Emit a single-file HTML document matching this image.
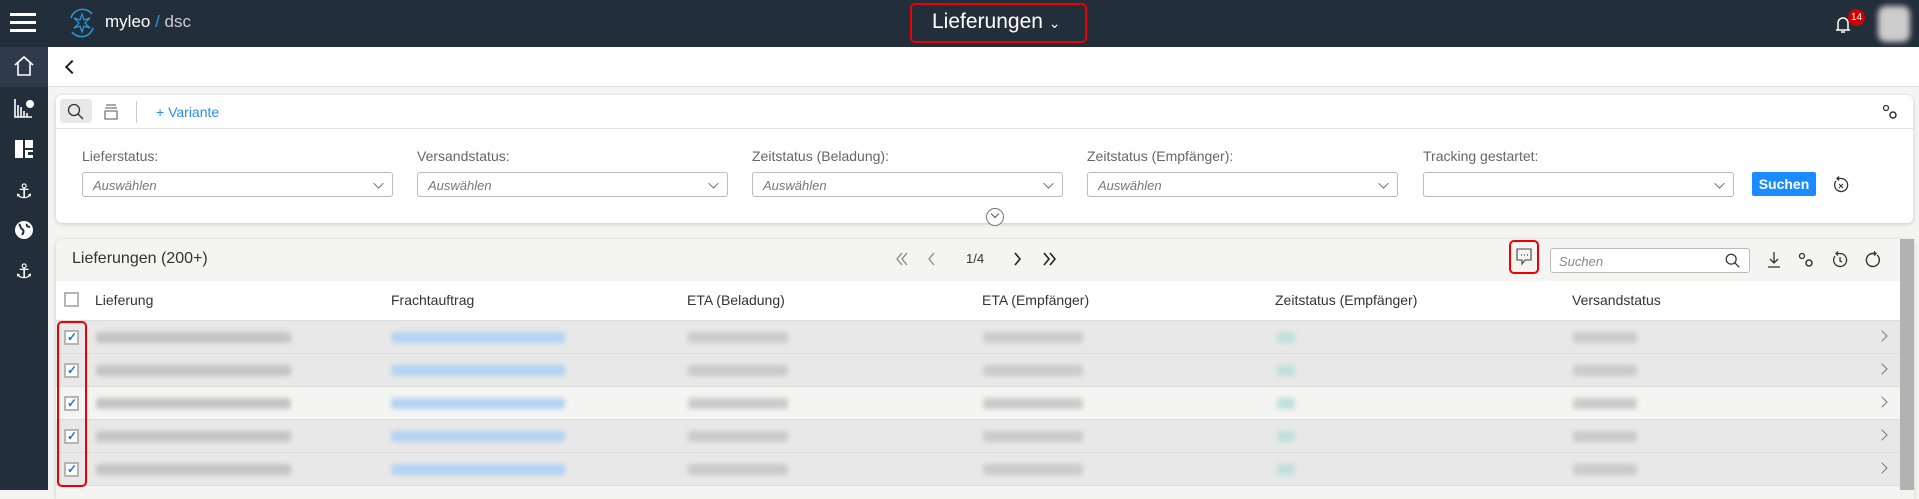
<!DOCTYPE html>
<html><head><meta charset="utf-8"><style>
*{box-sizing:border-box;margin:0;padding:0}
body{width:1919px;height:490px;overflow:hidden;background:#f4f4f3;font-family:"Liberation Sans",sans-serif;position:relative;color:#333}
.a{position:absolute}
.hdr{left:0;top:0;width:1919px;height:47px;background:#232e3b}
.side{left:0;top:47px;width:48px;height:443px;background:#232e3b}
.bc{left:48px;top:47px;width:1871px;height:40px;background:#fff;border-bottom:1px solid #e2e2e2}
.card{background:#fff;border-radius:6px;box-shadow:0 1px 4px rgba(0,0,0,.18)}
.lbl{font-size:14px;color:#666;top:148px}
.inp{top:172px;height:25px;width:311px;border:1px solid #bbb;border-radius:3px;background:#fff;font-size:13px;font-style:italic;color:#777;padding:5px 10px}
.chev{position:absolute;right:9px;top:6px;width:9px;height:9px;border-right:1.3px solid #555;border-bottom:1.3px solid #555;transform:rotate(45deg) scale(.8)}
.th{font-size:14px;color:#333;top:292px}
.row{left:56px;width:1844px;height:33px;border-bottom:1px solid #ddd}
.cb{width:15px;height:15px;border:2px solid #b5b5b5;background:#fff}
.blur{height:11px;border-radius:3px;filter:blur(2.5px)}
.rc{position:absolute;right:14px;top:11px;width:8px;height:8px;border-right:1px solid #777;border-top:1px solid #777;transform:rotate(45deg)}
</style></head><body>
<div class="a hdr"></div>
<div class="a" style="left:10px;top:13px;width:26px;height:3px;background:#fff;box-shadow:0 8px 0 #fff,0 16px 0 #fff"></div>
<svg class="a" style="left:65px;top:6px" width="34" height="34" viewBox="0 0 34 34"><path d="M6 12A12 12 0 0 1 27 8M28 22A12 12 0 0 1 7 26" stroke="#2a9ae0" fill="none" stroke-width="1.5"/><path d="M17 8L19 14 25 12 20 17 25 22 19 20 17 26 15 20 9 22 14 17 9 12 15 14Z" stroke="#2a9ae0" fill="none" stroke-width="1.2"/></svg>
<div class="a" style="left:105px;top:12px;font-size:17px;color:#fff">myleo<span style="color:#2a9ae0"> /</span><span style="color:#ccc"> dsc</span></div>
<div class="a" style="left:910px;top:3px;width:177px;height:40px;border:2px solid #e00;border-radius:5px"></div>
<div class="a" style="left:932px;top:10px;font-size:21px;color:#fff">Lieferungen <span style="font-size:14px">&#8964;</span></div>
<svg class="a" style="left:1831px;top:12px" width="24" height="24" viewBox="0 0 24 24"><path d="M5 18H19M7 18V11A5 5 0 0 1 17 11V18M10 20H14" stroke="#fff" fill="none" stroke-width="1.5"/></svg>
<div class="a" style="left:1848px;top:9px;width:17px;height:17px;border-radius:50%;background:#c00;color:#fff;font-size:10px;text-align:center;line-height:17px">14</div>
<div class="a" style="left:1878px;top:6px;width:32px;height:36px;background:#ccc;filter:blur(3px);border-radius:8px"></div>

<div class="a side"></div>
<div class="a" style="left:0;top:47px;width:48px;height:40px;background:#2f3b4a"></div>
<svg class="a" style="left:12px;top:54px" width="24" height="24" viewBox="0 0 24 24"><path d="M3 11L12 3 21 11M6 9V21H18V9" stroke="#fff" fill="none" stroke-width="1.6"/></svg>
<svg class="a" style="left:14px;top:98px" width="22" height="20" viewBox="0 0 22 20"><path d="M1 1V19H18M4 19V7M7 19V9M10 19V13M13 19V15" stroke="#fff" stroke-width="1.6" fill="none"/><circle cx="16" cy="6" r="4" fill="#fff"/></svg>
<svg class="a" style="left:15px;top:140px" width="18" height="18" viewBox="0 0 18 18"><path d="M0 0H8V18H0ZM10 0H18V8H10ZM10 10H18V18H10Z" fill="#fff"/><path d="M13 12H18V15H13Z" fill="#232e3b"/></svg>
<div class="a" style="left:15px;top:179px;font-size:20px;color:#fff;font-family:'DejaVu Sans'">&#9875;&#xFE0E;</div>
<svg class="a" style="left:14px;top:220px" width="20" height="20" viewBox="0 0 20 20"><circle cx="10" cy="10" r="9" fill="#fff"/><path d="M5 4C7 6 6 8 8 9S10 12 8 15M13 4C12 6 14 7 16 7" stroke="#232e3b" stroke-width="2" fill="none"/></svg>
<div class="a" style="left:15px;top:259px;font-size:20px;color:#fff;font-family:'DejaVu Sans'">&#9875;&#xFE0E;</div>

<div class="a bc"></div>
<div class="a" style="left:67px;top:62px;width:10px;height:10px;border-left:2px solid #222;border-bottom:2px solid #222;transform:rotate(45deg)"></div>

<div class="a card" style="left:56px;top:95px;width:1857px;height:128px"></div>
<div class="a" style="left:56px;top:128px;width:1857px;height:1px;background:#e2e2e2"></div>
<div class="a" style="left:60px;top:99px;width:32px;height:24px;background:#e8e8e8;border-radius:3px"></div>
<svg class="a" style="left:66px;top:102px" width="20" height="20" viewBox="0 0 20 20"><circle cx="8" cy="8" r="5.5" stroke="#333" fill="none" stroke-width="1.3"/><path d="M12 12L17 17" stroke="#333" stroke-width="1.3"/></svg>
<svg class="a" style="left:102px;top:102px" width="18" height="20" viewBox="0 0 18 20"><path d="M4 3H14M3 6H15M3 9H15V17H3Z" stroke="#777" fill="none" stroke-width="1.3"/></svg>
<div class="a" style="left:136px;top:101px;width:1px;height:22px;background:#ccc"></div>
<div class="a" style="left:156px;top:104px;font-size:14px;color:#2a8ef0">+ Variante</div>
<svg class="a" style="left:1880px;top:103px" width="20" height="18" viewBox="0 0 20 18"><circle cx="6" cy="5" r="2.5" stroke="#333" fill="none" stroke-width="1.3"/><circle cx="13" cy="12" r="3" stroke="#333" fill="none" stroke-width="1.5"/></svg>

<div class="a lbl" style="left:82px">Lieferstatus:</div>
<div class="a lbl" style="left:417px">Versandstatus:</div>
<div class="a lbl" style="left:752px">Zeitstatus (Beladung):</div>
<div class="a lbl" style="left:1087px">Zeitstatus (Empfänger):</div>
<div class="a lbl" style="left:1423px">Tracking gestartet:</div>
<div class="a inp" style="left:82px">Auswählen<i class="chev"></i></div>
<div class="a inp" style="left:417px">Auswählen<i class="chev"></i></div>
<div class="a inp" style="left:752px">Auswählen<i class="chev"></i></div>
<div class="a inp" style="left:1087px">Auswählen<i class="chev"></i></div>
<div class="a inp" style="left:1423px"><i class="chev"></i></div>
<div class="a" style="left:1752px;top:172px;width:64px;height:24px;background:#1a8cff;color:#fff;font-weight:bold;font-size:14px;text-align:center;line-height:24px;border-radius:2px">Suchen</div>
<svg class="a" style="left:1831px;top:175px" width="20" height="20" viewBox="0 0 20 20"><path d="M5 6A6.5 6.5 0 1 0 10 3.5H7M8 1.5L6 3.5 8 5.5" stroke="#333" fill="none" stroke-width="1.3"/><path d="M8 9L12 13M12 9L8 13" stroke="#333" stroke-width="1"/></svg>
<div class="a" style="left:986px;top:208px;width:18px;height:18px;border-radius:50%;border:1px solid #777;background:#fff"></div>
<div class="a" style="left:992px;top:211px;width:6px;height:6px;border-right:1px solid #555;border-bottom:1px solid #555;transform:rotate(45deg)"></div>

<div class="a card" style="left:56px;top:239px;width:1858px;height:260px;background:#f4f4f3;border-radius:6px 6px 0 0"></div>
<div class="a" style="left:1900px;top:239px;width:14px;height:251px;background:#b2b2b2"></div>
<div class="a" style="left:72px;top:250px;font-size:16px;color:#333">Lieferungen (200+)</div>
<svg class="a" style="left:894px;top:250px" width="120" height="18" viewBox="0 0 120 18"><path d="M8 3L3 9 8 15M13 3L8 9 13 15" stroke="#888" fill="none" stroke-width="1.3"/><path d="M40 3L35 9 40 15" stroke="#888" fill="none" stroke-width="1.3"/><path d="M122 3" /></svg>
<div class="a" style="left:966px;top:251px;font-size:13px;color:#333">1/4</div>
<svg class="a" style="left:1010px;top:250px" width="60" height="18" viewBox="0 0 60 18"><path d="M5 3L10 9 5 15" stroke="#222" fill="none" stroke-width="1.6"/><path d="M34 3L39 9 34 15M40 3L45 9 40 15" stroke="#222" fill="none" stroke-width="1.6"/></svg>
<div class="a" style="left:1509px;top:240px;width:30px;height:34px;border:2px solid #e00;border-radius:5px"></div>
<svg class="a" style="left:1515px;top:247px" width="18" height="20" viewBox="0 0 18 20"><path d="M2 2H16V13H10L7 17V13H2Z" stroke="#444" fill="none" stroke-width="1.1"/><path d="M6 8H7M9 8H10M12 8H13" stroke="#444" stroke-width="1.3"/></svg>
<div class="a" style="left:1550px;top:248px;width:200px;height:25px;border:1px solid #bbb;border-radius:3px;background:#fff;font-size:13px;font-style:italic;color:#888;padding:5px 8px">Suchen</div>
<svg class="a" style="left:1724px;top:252px" width="18" height="18" viewBox="0 0 20 20"><circle cx="8" cy="8" r="5.5" stroke="#333" fill="none" stroke-width="1.4"/><path d="M12 12L17 17" stroke="#333" stroke-width="1.4"/></svg>
<svg class="a" style="left:1765px;top:250px" width="18" height="20" viewBox="0 0 18 20"><path d="M9 2V13M5 9L9 13 13 9M3 17H15" stroke="#333" fill="none" stroke-width="1.3"/></svg>
<svg class="a" style="left:1796px;top:251px" width="20" height="18" viewBox="0 0 20 18"><circle cx="6" cy="5" r="2.5" stroke="#333" fill="none" stroke-width="1.3"/><circle cx="13" cy="12" r="3" stroke="#333" fill="none" stroke-width="1.5"/></svg>
<svg class="a" style="left:1830px;top:250px" width="20" height="20" viewBox="0 0 20 20"><path d="M5 6A6.5 6.5 0 1 0 10 3.5H7M8 1.5L6 3.5 8 5.5M10 7V11L12 12" stroke="#333" fill="none" stroke-width="1.3"/></svg>
<svg class="a" style="left:1863px;top:250px" width="20" height="20" viewBox="0 0 20 20"><path d="M14 5A6.5 6.5 0 1 1 10 3.5H12M11 1.5L13 3.5 11 5.5" stroke="#333" fill="none" stroke-width="1.4"/></svg>

<div class="a" style="left:56px;top:281px;width:1844px;height:40px;background:#fff;border-bottom:1px solid #ddd"></div>
<div class="a cb" style="left:64px;top:292px"></div>
<div class="a th" style="left:95px">Lieferung</div>
<div class="a th" style="left:391px">Frachtauftrag</div>
<div class="a th" style="left:687px">ETA (Beladung)</div>
<div class="a th" style="left:982px">ETA (Empfänger)</div>
<div class="a th" style="left:1275px">Zeitstatus (Empfänger)</div>
<div class="a th" style="left:1572px">Versandstatus</div>

<div id="rows"></div>
<script>
var bg=['#e8e8e8','#e8e8e8','#f4f4f3','#e8e8e8','#e8e8e8'],h='';
for(var i=0;i<5;i++){var t=321+i*33;
h+='<div class="a row" style="top:'+t+'px;background:'+bg[i]+'"><i class="rc"></i></div>';
h+='<div class="a cb" style="left:64px;top:'+(t+9)+'px;border-width:2px"></div><div class="a" style="left:67px;top:'+(t+9)+'px;font-size:12px;color:#1a73e8;font-weight:bold">&#10003;</div>';
h+='<div class="a blur" style="left:96px;top:'+(t+11)+'px;width:195px;background:#c4c4c4"></div>';
h+='<div class="a blur" style="left:391px;top:'+(t+11)+'px;width:174px;background:#b3d3f3"></div>';
h+='<div class="a blur" style="left:688px;top:'+(t+11)+'px;width:100px;background:#cbcbcb"></div>';
h+='<div class="a blur" style="left:983px;top:'+(t+11)+'px;width:100px;background:#cbcbcb"></div>';
h+='<div class="a blur" style="left:1277px;top:'+(t+11)+'px;width:18px;background:#bfe0dc"></div>';
h+='<div class="a blur" style="left:1573px;top:'+(t+11)+'px;width:64px;background:#cbcbcb"></div>';}
document.getElementById('rows').innerHTML=h;
</script>
<div class="a" style="left:57px;top:321px;width:30px;height:166px;border:2px solid #e00;border-radius:5px"></div>
</body></html>
